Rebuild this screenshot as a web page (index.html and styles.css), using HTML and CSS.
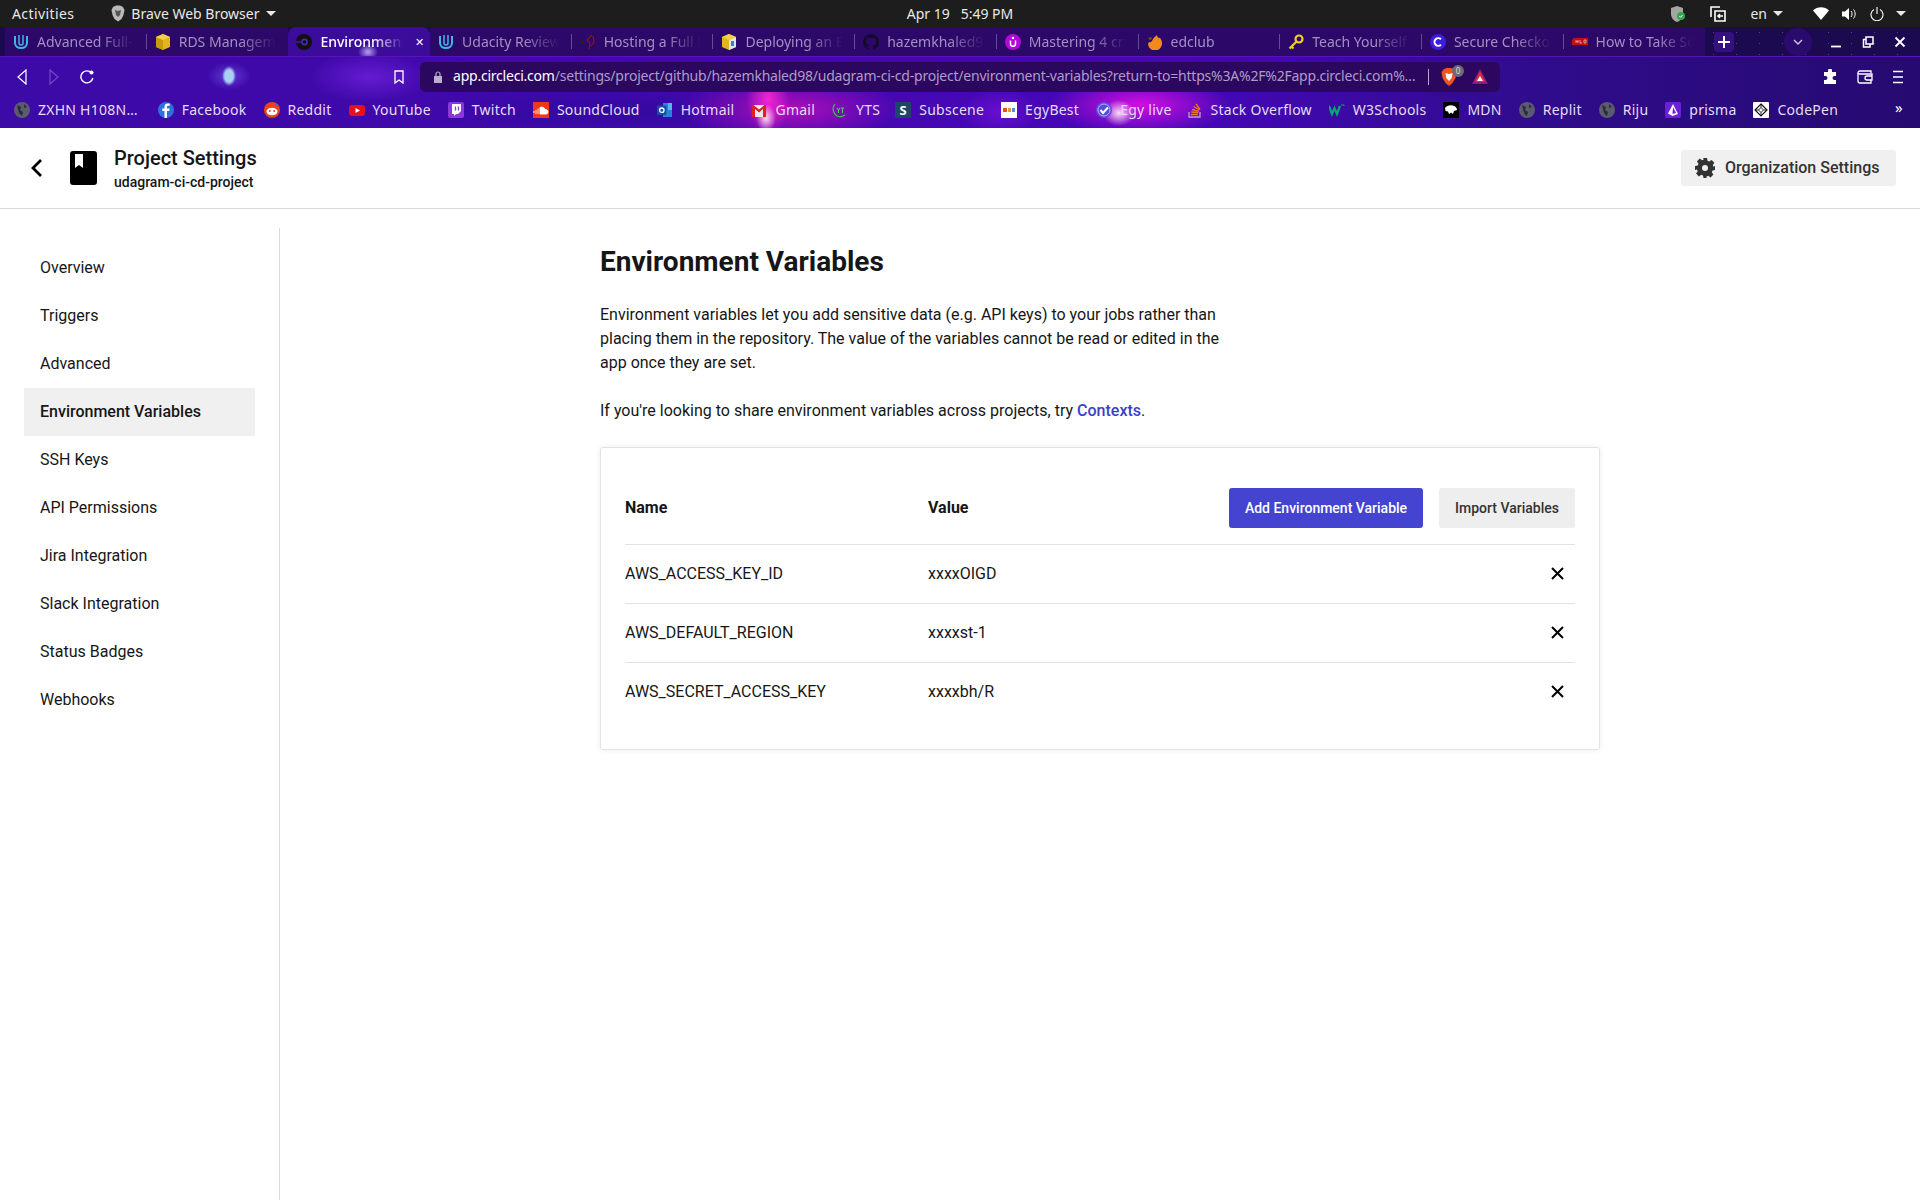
FILE: index.html
```html
<!DOCTYPE html>
<html lang="en">
<head>
<meta charset="UTF-8" />
<meta name="viewport" content="width=device-width, initial-scale=1.0"/>
<title>Environment Variables - CircleCI</title>
<link rel="stylesheet" href="styles.css">
</head>
<body>

<div class="topbar">
  <div class="top-left">
    <span class="activities">Activities</span>
    <svg class="brave-mini" width="14" height="17" viewBox="0 0 14 17"><path d="M2 2l3-1.500h4l3 1.500 1.500 3-1 5-2 4-3.500 2.500-3.500-2.500-2-4-1-5z" fill="#b9b9b9"/><path d="M4 5l3 1 3-1-1 5-2 2-2-2z" fill="#555"/></svg>
    <span>Brave Web Browser</span>
    <span class="caret"></span>
  </div>
  <div class="clock">Apr 19&nbsp;&nbsp; 5:49 PM</div>
  <div class="tray">
    <svg width="16" height="18" viewBox="0 0 16 18"><path d="M7 1l6 2v6c0 4-3 7-6 8-3-1-6-4-6-8V3z" fill="#a5a5a5"/><circle cx="11" cy="11" r="4" fill="#2fa84f"/><path d="M9.300 11l1.300 1.300 2-2.300" stroke="#fff" fill="none"/></svg>
    <svg class="tray-copy" width="16" height="16" viewBox="0 0 16 16" fill="none" stroke="#fff" stroke-width="1.600"><path d="M10 1H1v10"/><path d="M5 5h10v10H5z"/><path d="M13 10H8m2-2l-2 2 2 2"/></svg>
    <span class="tray-lang">en</span>
    <span class="caret"></span>
    <svg class="tray-wifi" width="16" height="13" viewBox="0 0 16 13"><path d="M0 3.500C4.500-.8 11.500-.8 16 3.500L8 13z" fill="#fff"/></svg>
    <svg class="tray-vol" width="15" height="14" viewBox="0 0 15 14"><path d="M0 4.500h3L7 1v12L3 9.500H0z" fill="#fff"/><path d="M9 4c1.400 1.800 1.400 4.200 0 6M11.500 2.500c2.200 2.800 2.200 6.200 0 9" stroke="#fff" fill="none"/></svg>
    <svg class="tray-power" width="14" height="14" viewBox="0 0 14 14" fill="none" stroke="#fff" stroke-width="1.100"><path d="M4 2.500a6 6 0 1 0 6 0M7 0v7"/></svg>
    <span class="caret tray-end"></span>
  </div>
</div>

<div class="chrome">
  <div class="tabstrip">
    <div class="tab sep">
      <svg width="16" height="16" viewBox="0 0 16 16" fill="none" stroke="#3fb4e8" stroke-width="2"><path d="M2 2v7c0 3 2.500 5 6 5s6-2 6-5V2"/><path d="M6 1v8c0 1 1 2 2 2s2-1 2-2V1" stroke-width="1.500"/></svg>
      <span class="tab-title">Advanced Full-Stack</span>
    </div>
    <div class="tab">
      <svg width="16" height="16" viewBox="0 0 16 16"><path d="M8 0l7 3v10l-7 3-7-3V3z" fill="#e3b51c"/><path d="M8 6v10l-7-3V3z" fill="#c79a10"/><path d="M8 6l7-3-7-3-7 3z" fill="#f3d04a"/></svg>
      <span class="tab-title">RDS Management</span>
    </div>
    <div class="tab active">
      <svg width="16" height="16" viewBox="0 0 16 16"><circle cx="8" cy="8" r="8" fill="#111"/><circle cx="8.500" cy="8" r="3.400" fill="#4a2aa8"/><circle cx="8.500" cy="8" r="1.800" fill="#111"/><path d="M0 6.800h5.500v2.400H0z" fill="#3a0c99"/></svg>
      <span class="tab-title">Environment Variables</span>
      <span class="tab-close">&#10005;</span>
    </div>
    <div class="tab sep">
      <svg width="16" height="16" viewBox="0 0 16 16" fill="none" stroke="#3fb4e8" stroke-width="2"><path d="M2 2v7c0 3 2.500 5 6 5s6-2 6-5V2"/><path d="M6 1v8c0 1 1 2 2 2s2-1 2-2V1" stroke-width="1.500"/></svg>
      <span class="tab-title">Udacity Reviews</span>
    </div>
    <div class="tab sep">
      <svg width="16" height="16" viewBox="0 0 16 16" fill="none"><path d="M0 8h4" stroke="#222" stroke-width="3"/><path d="M12 1L7 6l3 3-1 6M13 2l1 6-3 4" stroke="#8e1020" stroke-width="1.200"/></svg>
      <span class="tab-title">Hosting a Full Stack</span>
    </div>
    <div class="tab sep">
      <svg width="16" height="16" viewBox="0 0 16 16"><path d="M8 0l7 3v10l-7 3-7-3V3z" fill="#e3b51c"/><path d="M8 6v10l7-3V3z" fill="#dbe7f7"/><path d="M8 6l7-3-7-3-7 3z" fill="#f3d04a"/><path d="M10 7h3v5h-3z" fill="#3f7fd0"/></svg>
      <span class="tab-title">Deploying an Express</span>
    </div>
    <div class="tab sep">
      <svg width="16" height="16" viewBox="0 0 16 16"><path d="M8 0a8 8 0 0 0-2.500 15.600c.4.100.5-.2.500-.4v-1.400c-2.200.5-2.700-1-2.700-1-.4-.9-.9-1.200-.9-1.200-.7-.5.100-.5.100-.5.800.1 1.200.8 1.200.8.700 1.200 1.900.9 2.300.7.100-.5.300-.9.500-1.100-1.800-.2-3.600-.9-3.600-4 0-.9.300-1.600.8-2.100-.1-.2-.4-1 .1-2.100 0 0 .7-.2 2.200.8a7.500 7.500 0 0 1 4 0c1.500-1 2.200-.8 2.200-.8.400 1.100.2 1.900.1 2.100.5.600.8 1.300.8 2.100 0 3.100-1.900 3.800-3.700 4 .3.300.6.700.6 1.500v2.200c0 .2.100.5.500.4A8 8 0 0 0 8 0z" fill="#14092e"/></svg>
      <span class="tab-title">hazemkhaled98</span>
    </div>
    <div class="tab sep">
      <svg width="16" height="16" viewBox="0 0 16 16"><circle cx="8" cy="8" r="8" fill="#b308d8"/><path d="M5.500 6.500v3.500c0 1.500 1 2.300 2.500 2.300s2.500-.8 2.500-2.300V6.500" stroke="#fff" stroke-width="1.500" fill="none"/><circle cx="8" cy="4" r="1.200" fill="#fff"/></svg>
      <span class="tab-title">Mastering 4 critical</span>
    </div>
    <div class="tab sep">
      <svg width="16" height="16" viewBox="0 0 16 16"><path d="M2 8c2 1 3-1 4-3 1-2 3-3 4-4 0 2 1 3 3 3 1 1 2 3 2 5a7 7 0 0 1-14 1z" fill="#f28a1c"/><path d="M1 4l3-1 1 2-2 1z" fill="#55601c"/></svg>
      <span class="tab-title">edclub</span>
    </div>
    <div class="tab sep">
      <svg width="16" height="16" viewBox="0 0 16 16" fill="none"><circle cx="11" cy="5" r="3.500" stroke="#f0cf1d" stroke-width="2.200"/><path d="M8.500 7.500L1.500 14.500M3.500 12.500l2 2" stroke="#f0cf1d" stroke-width="2.200"/></svg>
      <span class="tab-title">Teach Yourself</span>
    </div>
    <div class="tab sep">
      <svg width="16" height="16" viewBox="0 0 16 16"><circle cx="8" cy="8" r="8" fill="#3d1ee0"/><path d="M11 5.300a3.800 3.800 0 1 0 0 5.400" stroke="#fff" stroke-width="2" fill="none"/></svg>
      <span class="tab-title">Secure Checkout</span>
    </div>
    <div class="tab">
      <svg width="16" height="16" viewBox="0 0 16 16"><path d="M2 4h14v7H0V6z" fill="#c40d1c"/><path d="M4 6v3M6 6v3M4 7.500h2M8 6v3h2M12 6h2v3h-2z" stroke="#f3c2c2" stroke-width=".7" fill="none"/></svg>
      <span class="tab-title">How to Take Screenshots</span>
    </div>
    <div class="new-tab"><svg width="12" height="12" viewBox="0 0 12 12"><path d="M6 0v12M0 6h12" stroke="#fff" stroke-width="2"/></svg></div>
    <div class="tab-search"><svg width="10" height="6" viewBox="0 0 10 6" fill="none"><path d="M1 1l4 4 4-4" stroke="#cfc6e6" stroke-width="1.400"/></svg></div>
    <div class="win-btns">
      <svg width="12" height="12" viewBox="0 0 12 12"><path d="M1 10.500h10" stroke="#fff" stroke-width="1.800"/></svg>
      <svg width="12" height="12" viewBox="0 0 12 12" fill="none" stroke="#fff" stroke-width="1.500"><path d="M4 1h7v7H4zM4 3.500H1.500V11H8V8.500"/></svg>
      <svg width="12" height="12" viewBox="0 0 12 12"><path d="M1.500 1.500l9 9M10.500 1.500l-9 9" stroke="#fff" stroke-width="1.800"/></svg>
    </div>
  </div>

  <div class="toolbar">
    <div class="nav-btns">
      <svg class="nav-back" width="10" height="16" viewBox="0 0 10 16" fill="none"><path d="M9 1L1 8l8 7z" stroke="#fff" stroke-width="1.200"/></svg>
      <svg class="nav-fwd" width="10" height="16" viewBox="0 0 10 16" fill="none"><path d="M1 1l8 7-8 7z" stroke="#7a48c8" stroke-width="1.200"/></svg>
      <svg class="nav-reload" width="14" height="14" viewBox="0 0 14 14" fill="none"><path d="M11.500 3a6 6 0 1 0 1.300 5" stroke="#fff" stroke-width="1.400"/><circle cx="11.500" cy="2.500" r="2" fill="#fff"/></svg>
      <svg class="nav-mark" width="10" height="14" viewBox="0 0 10 14" fill="none"><path d="M1 1h8v12L5 10l-4 3z" stroke="#fff" stroke-width="1.300"/></svg>
    </div>
    <div class="address">
      <svg width="10" height="12" viewBox="0 0 10 12"><path d="M1 5h8v7H1z" fill="#b9aecb"/><path d="M3 5V3a2 2 0 0 1 4 0v2" stroke="#b9aecb" stroke-width="1.200" fill="none"/></svg>
      <span class="url"><b>app.circleci.com</b>/settings/project/github/hazemkhaled98/udagram-ci-cd-project/environment-variables?return-to=https%3A%2F%2Fapp.circleci.com%&hellip;</span>
      <span class="addr-sep"></span>
      <span class="shields">
        <svg width="16" height="18" viewBox="0 0 16 18"><path d="M3 1l3-1h4l3 1 2.500 3-1 6-3 5L8 18l-3.500-3-3-5-1-6z" fill="#f0541e"/><path d="M4.500 5L8 6l3.500-1-.8 5L8 13l-2.700-3z" fill="#fff"/></svg>
        <span class="shield-count">0</span>
      </span>
      <svg class="bat" width="16" height="15" viewBox="0 0 16 15"><path d="M8 0l8 15H0z" fill="#8a1f78"/><path d="M8 2.500L13.500 13h-11z" fill="#e02b37"/><path d="M8 7l3 5H5z" fill="#fff"/></svg>
    </div>
    <div class="tool-right">
      <svg width="16" height="16" viewBox="0 0 16 16"><path d="M6 1.500a2 2 0 0 1 4 0V3h4v4h-1.500a2 2 0 0 0 0 4H14v4H2v-4h1.500a2 2 0 0 0 0-4H2V3h4z" fill="#fff"/></svg>
      <svg width="16" height="14" viewBox="0 0 16 14" fill="none" stroke="#fff" stroke-width="1.300"><path d="M14 3V1H3C1.500 1 1 2 1 3v8c0 1 .5 2 2 2h11v-3"/><path d="M1 3c0 1 1 1 2 1h12v6H10a2 2 0 0 1 0-4h5"/></svg>
      <svg width="12" height="14" viewBox="0 0 12 14"><path d="M1 1.500h10M1 7h10M1 12.500h10" stroke="#fff" stroke-width="1.600"/></svg>
    </div>
  </div>

  <div class="bookmarks">
    <div class="bm"><svg width="16" height="16" viewBox="0 0 16 16"><circle cx="8" cy="8" r="8" fill="#5b5b6e"/><path d="M3 3l4 2-1 3 3 2-1 4-3-3zM10 2l3 3-3 1z" fill="#2a2a3c"/></svg>ZXHN H108N&hellip;</div>
    <div class="bm"><svg width="16" height="16" viewBox="0 0 16 16"><circle cx="8" cy="8" r="8" fill="#2f6fe0"/><path d="M9 16V9h2.300l.3-2.500H9V5c0-.8.300-1.200 1.300-1.200h1.400V1.600C11 1.500 10.400 1.500 9.800 1.500 7.800 1.500 6.500 2.700 6.500 4.800v1.700H4.300V9h2.200v7z" fill="#fff"/></svg>Facebook</div>
    <div class="bm"><svg width="16" height="16" viewBox="0 0 16 16"><circle cx="8" cy="8" r="8" fill="#f0401a"/><ellipse cx="8" cy="9.500" rx="5.500" ry="3.800" fill="#fff"/><circle cx="5.800" cy="9" r="1" fill="#f0401a"/><circle cx="10.200" cy="9" r="1" fill="#f0401a"/><circle cx="12" cy="2.500" r="1.300" fill="#3a6fe0"/></svg>Reddit</div>
    <div class="bm"><svg width="16" height="16" viewBox="0 0 16 16"><rect y="3" width="16" height="11" rx="3" fill="#e8101c"/><path d="M6.500 6l4.500 2.500L6.500 11z" fill="#fff"/></svg>YouTube</div>
    <div class="bm"><svg width="16" height="16" viewBox="0 0 16 16"><rect width="16" height="16" rx="2" fill="#8c37e0"/><path d="M4 2h9v7l-3 3H8l-2 2v-2H4z" fill="#fff"/><path d="M7.500 4.500v4M10.500 4.500v4" stroke="#8c37e0" stroke-width="1.300"/></svg>Twitch</div>
    <div class="bm"><svg width="16" height="16" viewBox="0 0 16 16"><rect width="16" height="16" fill="#f2361a"/><path d="M1 11V9M3 12V8M5 12V6.500M7 12V5.500c2-1 4.500 0 5 2 1.500-.3 3 .8 3 2.300S14 12 13 12z" stroke="#fff" fill="#fff" stroke-width=".9"/></svg>SoundCloud</div>
    <div class="bm"><svg width="16" height="16" viewBox="0 0 16 16"><path d="M6 1h9v14H6z" fill="#2a82d8"/><path d="M11 1h4v7h-4z" fill="#55b5ee"/><rect y="3.500" width="9.500" height="9.500" rx="1" fill="#1550a8"/><circle cx="4.800" cy="8.200" r="2.200" fill="none" stroke="#fff" stroke-width="1.300"/></svg>Hotmail</div>
    <div class="bm"><svg width="16" height="16" viewBox="0 0 16 16"><path d="M1 3h14v12H1z" fill="#efe8ea"/><path d="M1 3v12h3V7l4 3.500L12 7v8h3V3h-1.500L8 7.500 2.500 3z" fill="#d8231f"/></svg>Gmail</div>
    <div class="bm"><svg width="16" height="16" viewBox="0 0 16 16" fill="none"><path d="M3 2a8 8 0 0 0 2 12c2 1 5 1 8-1" stroke="#35c048" stroke-width="1.300"/><path d="M5 6l1.500 2L8 6M6.500 8v3M9 6h3M10.500 6v5" stroke="#45d058" stroke-width="1.100"/></svg>YTS</div>
    <div class="bm"><span class="sub-icon">S</span>Subscene</div>
    <div class="bm"><svg width="16" height="16" viewBox="0 0 16 16"><rect width="16" height="16" fill="#fff"/><path d="M2 6h4v4H2z" fill="#e8501a"/><path d="M7 6h3v4H7z" fill="#e39a3c"/><path d="M11 6h3v4h-3z" fill="#5a8fd6"/></svg>EgyBest</div>
    <div class="bm"><svg width="16" height="16" viewBox="0 0 16 16"><circle cx="8" cy="8" r="8" fill="#5a4be0"/><circle cx="8" cy="8" r="6" fill="none" stroke="#b9b0ff"/><path d="M4.500 8l2.500 3 5-5.500" stroke="#fff" stroke-width="2" fill="none"/></svg>Egy live</div>
    <div class="bm"><svg width="16" height="16" viewBox="0 0 16 16" fill="none"><path d="M2 10v5h11v-5" stroke="#b7a5c4" stroke-width="1.300"/><path d="M4 12.500h7M4.300 10l7 .7M5 7.500l6.800 1.800M6.500 4.500l6 3.500M9 2l4 5.500" stroke="#f07820" stroke-width="1.300"/></svg>Stack Overflow</div>
    <div class="bm"><svg width="16" height="16" viewBox="0 0 16 16" fill="none"><path d="M0 4l3 8 2.500-6L8 12l3-8" stroke="#04aa6d" stroke-width="2.200"/><path d="M12 3h3v1" stroke="#04aa6d"/></svg>W3Schools</div>
    <div class="bm"><svg width="16" height="16" viewBox="0 0 16 16"><rect width="16" height="16" fill="#000"/><path d="M2 6c2-3 7-3.500 10-1.500 1.500 1 2 2.500 2 3.500l-3 1-1 3-2-1.500L6 12 5 9.500 2.500 9z" fill="#fff"/></svg>MDN</div>
    <div class="bm"><svg width="16" height="16" viewBox="0 0 16 16"><circle cx="8" cy="8" r="8" fill="#5b5b6e"/><path d="M3 3l4 2-1 3 3 2-1 4-3-3zM10 2l3 3-3 1z" fill="#2a2a3c"/></svg>Replit</div>
    <div class="bm"><svg width="16" height="16" viewBox="0 0 16 16"><circle cx="8" cy="8" r="8" fill="#5b5b6e"/><path d="M3 3l4 2-1 3 3 2-1 4-3-3zM10 2l3 3-3 1z" fill="#2a2a3c"/></svg>Riju</div>
    <div class="bm"><svg width="16" height="16" viewBox="0 0 16 16"><rect width="16" height="16" rx="2" fill="#6b1fd8"/><path d="M8 2L3 11.500 7.500 14l5.500-2z" fill="#fff"/><path d="M8 5l-.5 7 3.500-1z" fill="#6b1fd8"/></svg>prisma</div>
    <div class="bm"><svg width="16" height="16" viewBox="0 0 16 16" fill="none"><rect width="16" height="16" rx="1" fill="#fff"/><path d="M8 2l6 6-6 6-6-6z" stroke="#111" stroke-width="1.200"/><path d="M8 5.500L10.500 8 8 10.500 5.500 8zM8 2v3.500M8 10.500V14M2 8h3.500M10.500 8H14" stroke="#111" stroke-width=".9"/></svg>CodePen</div>
    <div class="bm-more">&raquo;</div>
  </div>
</div>

<div class="app-header">
  <svg class="back" width="12" height="20" viewBox="0 0 12 20" fill="none"><path d="M10 2L2 10l8 8" stroke="#000" stroke-width="2.800"/></svg>
  <svg class="book" width="27" height="34" viewBox="0 0 27 34"><path d="M3 0h21a3 3 0 0 1 3 3v28a3 3 0 0 1-3 3H3a3 3 0 0 1-3-3V3a3 3 0 0 1 3-3z" fill="#000"/><path d="M5 3h8v14l-4-3-4 3z" fill="#fff"/></svg>
  <div class="project">
    <div class="project-title">Project Settings</div>
    <div class="project-name">udagram-ci-cd-project</div>
  </div>
  <button class="org-btn">
    <svg width="20" height="20" viewBox="0 0 20 20"><path d="M8 0h4l.5 2.800 1.700.7 2.400-1.600 2.800 2.800-1.600 2.400.7 1.700L20 8v4l-2.500.5-.7 1.700 1.600 2.400-2.800 2.800-2.400-1.600-1.700.7L11.500 20h-3L8 17.500l-1.700-.7-2.400 1.600-2.800-2.800 1.600-2.400-.7-1.700L0 12V8l2.800-.5.7-1.700L1.900 3.400l2.800-2.800 2.400 1.600 1.700-.7z" fill="#333"/><circle cx="10" cy="10" r="3" fill="#f0f0f0"/></svg>
    <span class="org-label">Organization Settings</span>
  </button>
</div>

<div class="main">
  <div class="sidebar">
    <a class="side-item">Overview</a>
    <a class="side-item">Triggers</a>
    <a class="side-item">Advanced</a>
    <a class="side-item current">Environment Variables</a>
    <a class="side-item">SSH Keys</a>
    <a class="side-item">API Permissions</a>
    <a class="side-item">Jira Integration</a>
    <a class="side-item">Slack Integration</a>
    <a class="side-item">Status Badges</a>
    <a class="side-item">Webhooks</a>
  </div>

  <div class="content">
    <h1>Environment Variables</h1>
    <p>Environment variables let you add sensitive data (e.g. API keys) to your jobs rather than placing them in the repository. The value of the variables cannot be read or edited in the app once they are set.</p>
    <p>If you're looking to share environment variables across projects, try <a class="link">Contexts</a>.</p>

    <div class="card">
      <div class="row head">
        <div class="col-name">Name</div>
        <div class="col-value">Value</div>
        <button class="btn primary">Add Environment Variable</button>
        <button class="btn">Import Variables</button>
      </div>
      <div class="row">
        <div class="col-name">AWS_ACCESS_KEY_ID</div>
        <div class="col-value">xxxxOIGD</div>
        <svg class="del" width="13" height="13" viewBox="0 0 13 13"><path d="M1 1l11 11M12 1L1 12" stroke="#000" stroke-width="2"/></svg>
      </div>
      <div class="row">
        <div class="col-name">AWS_DEFAULT_REGION</div>
        <div class="col-value">xxxxst-1</div>
        <svg class="del" width="13" height="13" viewBox="0 0 13 13"><path d="M1 1l11 11M12 1L1 12" stroke="#000" stroke-width="2"/></svg>
      </div>
      <div class="row last">
        <div class="col-name">AWS_SECRET_ACCESS_KEY</div>
        <div class="col-value">xxxxbh/R</div>
        <svg class="del" width="13" height="13" viewBox="0 0 13 13"><path d="M1 1l11 11M12 1L1 12" stroke="#000" stroke-width="2"/></svg>
      </div>
    </div>
  </div>
</div>

</body>
</html>
```

FILE: styles.css
```css
* { margin: 0; padding: 0; box-sizing: border-box; }
body { background: white; font-family: Roboto, sans-serif; color: #161616; height: 1200px; overflow: hidden; }
svg { flex: none; display: block; }

/* ubuntu top bar */
.topbar {
  height: 27px;
  background: #1d1d1d;
  color: #e8e8e8;
  font-family: "Noto Sans", sans-serif;
  font-size: 14px;
  display: grid;
  grid-template-columns: 1fr auto 1fr;
  align-items: center;
}
.top-left { display: flex; align-items: center; padding-left: 12px; }
.activities { margin-right: 37px; letter-spacing: 0.400px; }
.brave-mini { margin-right: 6px; }
.caret {
  width: 0; height: 0;
  border-left: 5px solid transparent;
  border-right: 5px solid transparent;
  border-top: 5px solid #e8e8e8;
  margin-left: 6px;
}
.tray { display: flex; align-items: center; justify-content: flex-end; padding-right: 14px; }
.tray-copy { margin-left: 24px; }
.tray-lang { margin-left: 24px; }
.tray-wifi { margin-left: 30px; }
.tray-vol { margin-left: 13px; }
.tray-power { margin-left: 13px; }
.tray-end { margin-left: 12px; }

/* browser chrome with the galaxy theme */
.chrome {
  height: 101px;
  font-family: "Noto Sans", sans-serif;
  font-size: 14px;
  background:
    radial-gradient(ellipse 10px 14px at 766px 91px, rgba(255,225,240,.95), transparent),
    radial-gradient(ellipse 22px 36px at 768px 72px, rgba(255,40,215,.9), transparent),
    radial-gradient(ellipse 110px 34px at 790px 82px, rgba(210,15,190,.75), transparent),
    radial-gradient(ellipse 16px 13px at 1119px 86px, rgba(255,230,250,.95), transparent),
    radial-gradient(ellipse 90px 30px at 1140px 78px, rgba(225,15,230,.9), transparent),
    radial-gradient(ellipse 40px 24px at 1000px 85px, rgba(130,20,225,.6), transparent),
    radial-gradient(ellipse 7px 10px at 229px 49px, #a8d0f5 60%, transparent),
    radial-gradient(ellipse 22px 14px at 229px 49px, rgba(120,90,240,.6), transparent),
    radial-gradient(ellipse 60px 25px at 370px 50px, rgba(125,40,235,.6), transparent),
    radial-gradient(ellipse 200px 26px at 600px 84px, rgba(30,10,140,.45), transparent),
    linear-gradient(90deg, #3c0aa6 0%, #4408b0 40%, #4507b8 62%, #2f0c8c 80%, #260a70 100%);
}

.tabstrip {
  height: 30px;
  display: flex;
  align-items: stretch;
  padding-left: 5px;
  border-bottom: 1px solid #5c12b8;
  background:
    radial-gradient(circle, rgba(150,100,230,.5) 0.6px, transparent 1px) 0 0 / 23px 11px,
    #1c0a50;
  position: relative;
}
.tab {
  flex: 0 0 141.700px;
  min-width: 0;
  display: flex;
  align-items: center;
  gap: 8px;
  padding: 0 8px;
  background: #2c0968;
  color: #a48fc4;
  position: relative;
}
.tab.sep::after {
  content: "";
  position: absolute;
  right: 0; top: 7px; bottom: 7px;
  width: 1px;
  background: rgba(255,255,255,.28);
}
.tab.active {
  background: radial-gradient(ellipse 10px 8px at 80px 25px, #b9a2f2, transparent), #3a0c99;
  color: white;
  font-weight: 500;
  border-radius: 8px 8px 0 0;
  padding-right: 6px;
}
.tab-title {
  flex: 1;
  min-width: 0;
  overflow: hidden;
  white-space: nowrap;
  -webkit-mask-image: linear-gradient(90deg, #000 60%, transparent 96%);
  mask-image: linear-gradient(90deg, #000 60%, transparent 96%);
}
.tab-close { font-size: 11px; color: white; }
.new-tab {
  width: 20px; height: 20px;
  margin: 5px 0 0 9px;
  background: #341080;
  border-radius: 4px;
  display: flex; align-items: center; justify-content: center;
}
.tab-search {
  width: 28px; height: 28px;
  margin: 1px 0 0 50px;
  background: #2a0a6c;
  border-radius: 50%;
  display: flex; align-items: center; justify-content: center;
}
.win-btns { display: flex; align-items: center; gap: 20px; margin-left: 18px; }

.toolbar { height: 39px; display: flex; align-items: center; }
.nav-btns { width: 420px; display: flex; align-items: center; flex: none; }
.nav-back { margin-left: 17px; }
.nav-fwd { margin-left: 22px; }
.nav-reload { margin-left: 21px; }
.nav-mark { margin-left: 300px; }

.address {
  flex: none;
  width: 1080px;
  height: 30px;
  background: #2c0760;
  border-radius: 6px;
  display: flex;
  align-items: center;
  padding-left: 13px;
  color: #ad9dc6;
}
.url { flex: none; width: 968px; margin: 0 0 2px 10px; white-space: nowrap; font-size: 14px; letter-spacing: -0.220px; }
.url b { color: white; font-weight: 400; }
.addr-sep { width: 1px; height: 16px; background: #b8a9d0; margin-left: 7px; }
.shields { position: relative; margin-left: 12px; }
.shield-count {
  position: absolute;
  left: 11px; top: -3px;
  width: 12px; height: 12px;
  border-radius: 50%;
  background: #6b6b74;
  color: #ddd;
  font-size: 8px;
  line-height: 12px;
  text-align: center;
}
.bat { margin-left: 15px; }
.tool-right { display: flex; align-items: center; gap: 19px; margin-left: 322px; }

.bookmarks {
  height: 32px;
  display: flex;
  align-items: center;
  gap: 17px;
  padding: 0 0 5px 14px;
  color: #e6dcf6;
  letter-spacing: 0.250px;
  position: relative;
}
.bm { display: flex; align-items: center; gap: 8px; white-space: nowrap; }
.bm:first-child { margin-right: 3px; }
.bm:nth-child(9) { margin-right: -2px; }
.bm:nth-child(12) { margin-right: -2px; }
.sub-icon {
  width: 16px; height: 16px;
  background: #1d4766;
  color: white;
  font-size: 13px;
  font-weight: 700;
  line-height: 16px;
  text-align: center;
}
.bm-more { position: absolute; right: 17px; top: 1px; color: white; font-size: 15px; }

/* circleci page */
.app-header {
  height: 81px;
  border-bottom: 1px solid #d9d9d9;
  display: flex;
  align-items: center;
  padding: 0 24px 0 31px;
}
.back { margin-right: 27px; }
.book { margin-right: 17px; }
.project-title { font-size: 20px; font-weight: 500; line-height: 27px; }
.project-name { font-size: 14px; font-weight: 500; line-height: 20px; }
.org-btn {
  margin-left: auto;
  width: 215px;
  height: 36px;
  background: #f0f0f0;
  border: none;
  border-radius: 3px;
  display: flex;
  align-items: center;
  gap: 10px;
  padding-left: 14px;
  font-family: Roboto, sans-serif;
  font-size: 16px;
  font-weight: 500;
  color: #333;
}
.org-label { margin-bottom: 2px; }

.main { display: flex; margin-top: 19px; height: 972px; }
.sidebar {
  width: 280px;
  flex: none;
  border-right: 1px solid #d9d9d9;
  padding: 16px 0 0 24px;
}
.side-item {
  display: block;
  width: 231px;
  height: 48px;
  line-height: 48px;
  padding-left: 16px;
  font-size: 16px;
}
.side-item.current { background: #f0f0f0; font-weight: 500; }

.content { padding: 16px 0 0 320px; }
h1 { font-size: 28px; font-weight: 700; line-height: 36px; margin-bottom: 23px; }
.content p { width: 640px; font-size: 16px; line-height: 24px; margin-bottom: 24px; }
.link { color: #3b3fc9; font-weight: 500; }

.card {
  width: 1000px;
  height: 303px;
  margin-top: 24px;
  padding: 0 24px;
  border: 1px solid #e3e3e3;
  border-radius: 3px;
  box-shadow: 0 0 6px rgba(0,0,0,.08);
}
.row {
  height: 59px;
  display: flex;
  align-items: center;
  padding-bottom: 2px;
  border-bottom: 1px solid #e3e3e3;
  font-size: 16px;
}
.row.last { border-bottom: none; }
.row.head { height: 97px; padding: 24px 0 0; font-weight: 700; }
.head .col-name, .head .col-value { margin-bottom: 2px; }
.col-name { width: 303px; flex: none; }
.col-value { flex: 1; }
.btn {
  height: 40px;
  width: 136px;
  margin-left: 16px;
  background: #eeeeee;
  border: none;
  border-radius: 3px;
  font-family: Roboto, sans-serif;
  font-size: 14px;
  font-weight: 500;
  color: #333;
}
.btn.primary { width: 194px; margin-left: 0; background: #4444d0; color: white; }
.del { margin-right: 11px; }
```
